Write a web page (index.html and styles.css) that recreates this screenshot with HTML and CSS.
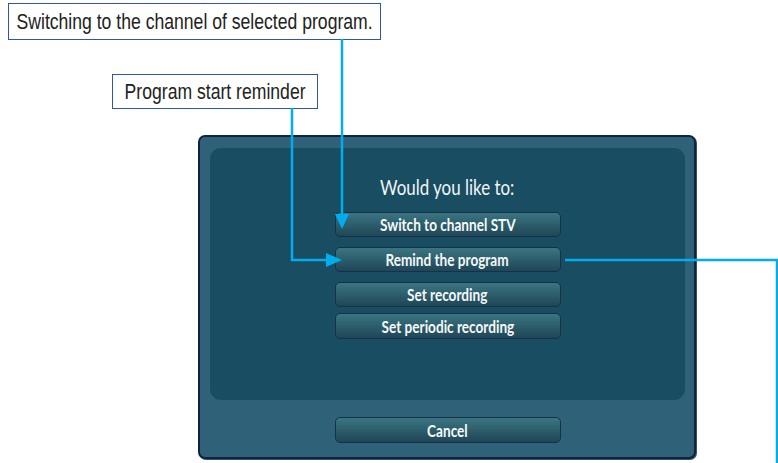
FILE: index.html
```html
<!DOCTYPE html>
<html>
<head>
    <title>Program options</title>
    <link rel="stylesheet" href="styles.css">
</head>
<body>
    <div class="page">
        <!-- the dialog on the TV screen -->
        <div class="dialog">
            <div class="panel">
                <p class="question"><span class="narrow">Would you like to:</span></p>
                <div class="choices">
                    <a class="btn" href="#"><span class="narrow">Switch to channel STV</span></a>
                    <a class="btn" href="#"><span class="narrow">Remind the program</span></a>
                    <a class="btn" href="#"><span class="narrow">Set recording</span></a>
                    <a class="btn btn-last" href="#"><span class="narrow">Set periodic recording</span></a>
                </div>
            </div>
            <a class="btn btn-cancel" href="#"><span class="narrow">Cancel</span></a>
        </div>

        <!-- the callouts around it -->
        <div class="note note-switch"><span class="narrow">Switching to the channel of selected program.</span></div>
        <div class="note note-remind"><span class="narrow">Program start reminder</span></div>

        <svg class="wires" width="778" height="463" viewBox="0 0 778 463">
            <g fill="none" stroke="#00adef" stroke-width="2.5">
                <polyline points="342,39 342,216"/>
                <polyline points="292,108 292,260 328,260"/>
                <polyline points="565,260 777,260 777,463"/>
            </g>
            <g fill="#00adef">
                <polygon points="335,214 349,214 342,229"/>
                <polygon points="326,253 326,267 342,260"/>
            </g>
        </svg>
    </div>
</body>
</html>
```

FILE: styles.css
```css
/* the whole picture */
body {
    margin: 0;
    padding: 0;
    background: white;
    font-family: Lato, "DejaVu Sans Condensed", sans-serif;
}

.page {
    position: relative;
    width: 778px;
    height: 463px;
    overflow: hidden;
    padding-top: 135px;
    box-sizing: border-box;
}

/* text that has to look condensed */
.narrow {
    display: inline-block;
    white-space: nowrap;
    transform: scaleX(0.8);
}

/* dialog box */
.dialog {
    box-sizing: border-box;
    width: 498px;
    height: 324px;
    margin-left: 198px;
    background: #2f6278;
    border: 2px solid #10243f;
    border-radius: 7px;
    box-shadow: 1px 1px 0 #3d4f6e;
    padding: 11px 9px 0 10px;
}

.panel {
    height: 252px;
    background: #194d61;
    border-radius: 11px;
    padding-top: 24px;
    box-sizing: border-box;
}

.question {
    display: flex;
    justify-content: center;
    margin: 0 0 10px 0;
    color: #f2f5f6;
    font-size: 22px;
    line-height: 30px;
}

.question .narrow {
    transform: scaleX(0.77);
}

.choices {
    display: flex;
    flex-direction: column;
    align-items: center;
    gap: 10px;
}

/* - buttons */
.btn {
    display: flex;
    justify-content: center;
    align-items: center;
    box-sizing: border-box;
    width: 226px;
    height: 25px;
    border: 1px solid #15324a;
    border-radius: 5px;
    background: linear-gradient(#3b7581, #1f4657);
    color: #f6f8f8;
    font-weight: bold;
    font-size: 17px;
    text-decoration: none;
}

.btn-last {
    margin-top: -4px;
    height: 26px;
}

.btn-cancel {
    margin: 17px auto 0 auto;
    height: 26px;
}

/* callouts */
.note {
    position: absolute;
    box-sizing: border-box;
    display: flex;
    justify-content: center;
    align-items: center;
    border: 1px solid #3056a6;
    background: white;
    color: #222;
    font-family: "Liberation Sans", sans-serif;
    font-size: 22px;
}

.note-switch {
    left: 8px;
    top: 3px;
    width: 373px;
    height: 37px;
}

.note-remind {
    left: 112px;
    top: 74px;
    width: 206px;
    height: 35px;
}

.wires {
    position: absolute;
    left: 0;
    top: 0;
}
```
